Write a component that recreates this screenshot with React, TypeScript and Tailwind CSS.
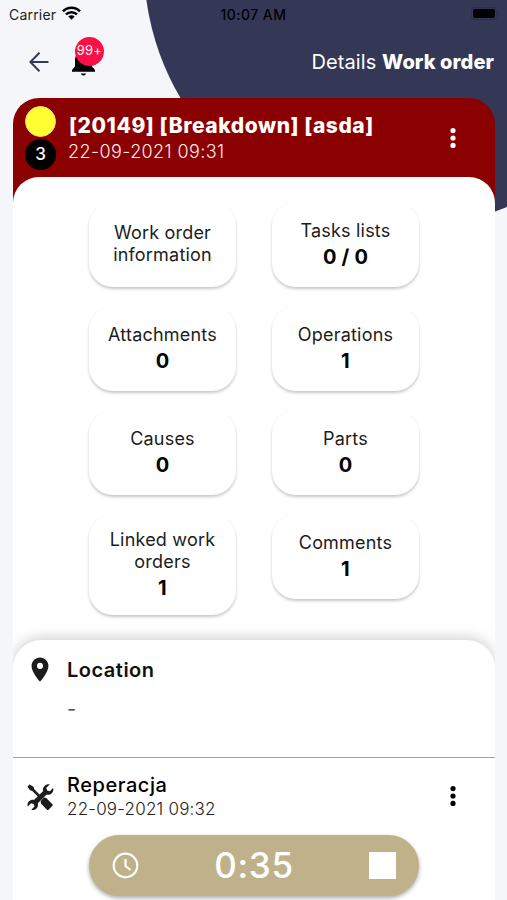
import React from 'react';
import { MdLocationOn } from 'react-icons/md';

interface Tile {
    label: string;
    value?: string;
    // Tall tiles hold a two line label and a value
    tall?: boolean;
}

const TILES: Tile[] = [
    { label: 'Work order information' },
    { label: 'Tasks lists', value: '0 / 0' },
    { label: 'Attachments', value: '0' },
    { label: 'Operations', value: '1' },
    { label: 'Causes', value: '0' },
    { label: 'Parts', value: '0' },
    { label: 'Linked work orders', value: '1', tall: true },
    { label: 'Comments', value: '1' },
];

function MoreDots() {
    return (
        <svg width="6" height="20" viewBox="0 0 6 20" fill="currentColor">
            <circle cx="3" cy="2.6" r="2.6" />
            <circle cx="3" cy="10" r="2.6" />
            <circle cx="3" cy="17.4" r="2.6" />
        </svg>
    );
}

// Screwdriver crossed over a double-ended wrench
function ToolsIcon() {
    return (
        <svg width="28" height="28" viewBox="0 0 28 28" fill="#1c1c1c">
            <path d="M8.2 16.8 17 8.2c-.7-3.5 1.8-7 5.8-7l1 .2-3.5 3.4.8 2.7 2.7.7 3.3-3.3c1 4-2 7.6-6.7 6.8l-8.6 8.5c.8 4-1.5 6.900-5.5 6.800l-1-.2 3.200-3.300-.7-2.600-2.700-.7-3.400 3.300c-1-4 1.900-7.500 6.500-6.700z" />
            <path d="m1.500 3.500 2-2 4 2.300.8 2.400 6.200 6.200-1.900 1.900-6.300-6.300-2.300-.8z" />
            <path d="m14.700 18 3.300-3.500 2.200.4 6 6c.7.7.7 1.400 0 2.100l-3.400 3.400c-.7.7-1.400.7-2.100 0l-5.800-5.900z" />
        </svg>
    );
}

function StatusBar() {
    return (
        <div className="flex h-7 items-center justify-between pl-[9px] pr-[7px] text-[14px] text-black">
            <div className="flex w-[160px] items-center gap-1.5">
                <span className="tracking-[0.2px] text-[#222]">Carrier</span>
                <svg className="mb-0.5" width="19" height="14" viewBox="0 0 19 14" fill="none" stroke="currentColor" strokeWidth="2.5">
                    <path d="M1 5.3a12 12 0 0 1 17 0" />
                    <path d="M4 8.4a7.8 7.8 0 0 1 11 0" />
                    <path d="M9.5 13.8 6.3 10.6a4.5 4.5 0 0 1 6.4 0z" fill="currentColor" stroke="none" />
                </svg>
            </div>
            <span className="mr-0.5 font-medium tracking-[0.45px]">10:07 AM</span>
            <div className="flex w-[160px] justify-end">
                <svg className="mb-0.5" width="29" height="13" viewBox="0 0 29 13">
                    <rect x="0.5" y="0.5" width="25" height="12" rx="3.5" fill="none" stroke="#2b2d4a" />
                    <rect x="2" y="2" width="22" height="9" rx="2" fill="#000" />
                    <path d="M27 4.5v4c1.6-.8 1.6-3.2 0-4z" fill="#2b2d4a" />
                </svg>
            </div>
        </div>
    );
}

function TopNav() {
    return (
        <div className="flex h-[70px] items-center pl-[29px] pr-[13px]">
            <svg className="mb-0.5" width="20" height="20" viewBox="0 0 20 20" fill="none" stroke="#35375a" strokeWidth="2">
                <path d="M19.5 10H1.5M10.5 .8 1.3 10l9.2 9.2" />
            </svg>
            <div className="relative ml-[23px]">
                <svg className="mb-0.5" width="23" height="27" viewBox="0 0 23 27" fill="#000">
                    <path d="M11.500 1c1.200 0 2 .8 2 2 4 1 6.500 4 6.500 8v6.500L23 21v1.700H0V21l3-3.500V11c0-4 2.500-7 6.500-8 0-1.200.8-2 2-2z" />
                    <path d="M9 24.500h5c-.3 1.300-1.100 2-2.500 2s-2.200-.7-2.500-2z" />
                </svg>
                <span className="absolute -top-[12px] left-[3px] flex h-[29px] w-[29px] items-center justify-center rounded-full bg-[#fb1045] pb-px text-[13px] tracking-[0.2px] text-white">
                    99+
                </span>
            </div>
            <h1 className="mb-0.5 ml-auto text-[20px] tracking-[0.1px] text-white">
                Details <span className="font-extrabold">Work order</span>
            </h1>
        </div>
    );
}

function TileCard({ label, value, tall }: Tile) {
    return (
        <button
            className={`flex w-[147px] flex-col items-center justify-center rounded-[24px] bg-white px-4 pb-0.5 text-[18px] leading-[22px] tracking-[0.2px] text-[#1c1c1c] shadow-[0_2px_3px_rgba(0,0,0,0.22)] ${tall ? 'h-[101px]' : 'h-[85px]'}`}
        >
            <span>{label}</span>
            {value && <span className="mt-1 text-[20px] font-bold text-black">{value}</span>}
        </button>
    );
}

export default function App() {
    return (
        <main className="relative h-[900px] w-[507px] overflow-hidden bg-[#f4f6f9] font-[Inter,sans-serif]">
            {/* Background circle */}
            <div className="absolute -top-[298px] left-[144px] h-[525px] w-[525px] rounded-full bg-[#353757]" />

            <div className="relative">
                <StatusBar />
                <TopNav />

                <section className="ml-[13px] h-[802px] w-[482px] overflow-hidden rounded-t-[26px] bg-[linear-gradient(#8b0000_120px,#fff_120px)]">
                    {/* Work order header */}
                    <header className="flex h-[79px] pl-3 pt-2 text-white">
                        <div className="flex flex-col gap-0.5">
                            <span className="h-[31px] w-[31px] rounded-full border border-[#ffd28a] bg-[#ffff32]" />
                            <span className="flex h-[31px] w-[31px] items-center justify-center rounded-full bg-black text-[17px] font-medium">3</span>
                        </div>
                        <div className="ml-[13px] pt-[7px]">
                            <h2 className="text-[21px] font-extrabold leading-[26px] tracking-[0.55px]">[20149] [Breakdown] [asda]</h2>
                            <p className="-ml-px text-[18px] font-light leading-[25px] tracking-[0.4px] text-[#fdeaea]">22-09-2021 09:31</p>
                        </div>
                        <div className="ml-auto mr-[39px] mt-[22px]">
                            <MoreDots />
                        </div>
                    </header>

                    <div className="h-[463px] rounded-t-[26px] bg-white pt-[25px]">
                        <div className="ml-[76px] grid w-[330px] grid-cols-[147px_147px] items-start justify-between gap-y-[19px]">
                            {TILES.map((tile) => (
                                <TileCard key={tile.label} {...tile} />
                            ))}
                        </div>
                    </div>

                    {/* Bottom panel */}
                    <div className="relative h-[260px] rounded-t-[28px] bg-white shadow-[0_-2px_14px_rgba(0,0,0,0.2)]">
                        <div className="flex h-[118px] border-b border-[#a3a5a8] pl-[11px] pt-[15px]">
                            <MdLocationOn className="h-[29px] w-[32px] text-[#1c1c1c]" />
                            <div className="ml-[11px] text-[20px]">
                                <h3 className="font-semibold leading-[30px] tracking-[0.5px] text-[#111]">Location</h3>
                                <p className="mt-2.5 leading-[28px] text-[#555]">-</p>
                            </div>
                        </div>
                        <div className="flex h-[77px] pl-[13px] pt-[15px]">
                            <div className="mt-2.5">
                                <ToolsIcon />
                            </div>
                            <div className="ml-[13px]">
                                <h3 className="text-[20px] font-medium leading-[25px] tracking-[0.55px] text-black">Reperacja</h3>
                                <p className="text-[17px] font-light leading-[23px] tracking-[0.2px] text-[#222]">22-09-2021 09:32</p>
                            </div>
                            <div className="ml-auto mr-[39px] mt-[13px] text-black">
                                <MoreDots />
                            </div>
                        </div>
                        <div className="ml-[76px] flex h-[61px] w-[330px] items-center justify-between rounded-full bg-[#bfb28b] px-[23px] text-white shadow-[0_2px_4px_rgba(0,0,0,0.35)]">
                            <svg width="27" height="27" viewBox="0 0 27 27" fill="none" stroke="currentColor" strokeWidth="2.2">
                                <circle cx="13.5" cy="13.5" r="11.8" />
                                <path d="M13.5 7v7l5 4" />
                            </svg>
                            <span className="text-[35px] font-medium tracking-[0.7px]">0:35</span>
                            <span className="h-[27px] w-[27px] bg-white" />
                        </div>
                    </div>
                </section>
            </div>
        </main>
    );
}
